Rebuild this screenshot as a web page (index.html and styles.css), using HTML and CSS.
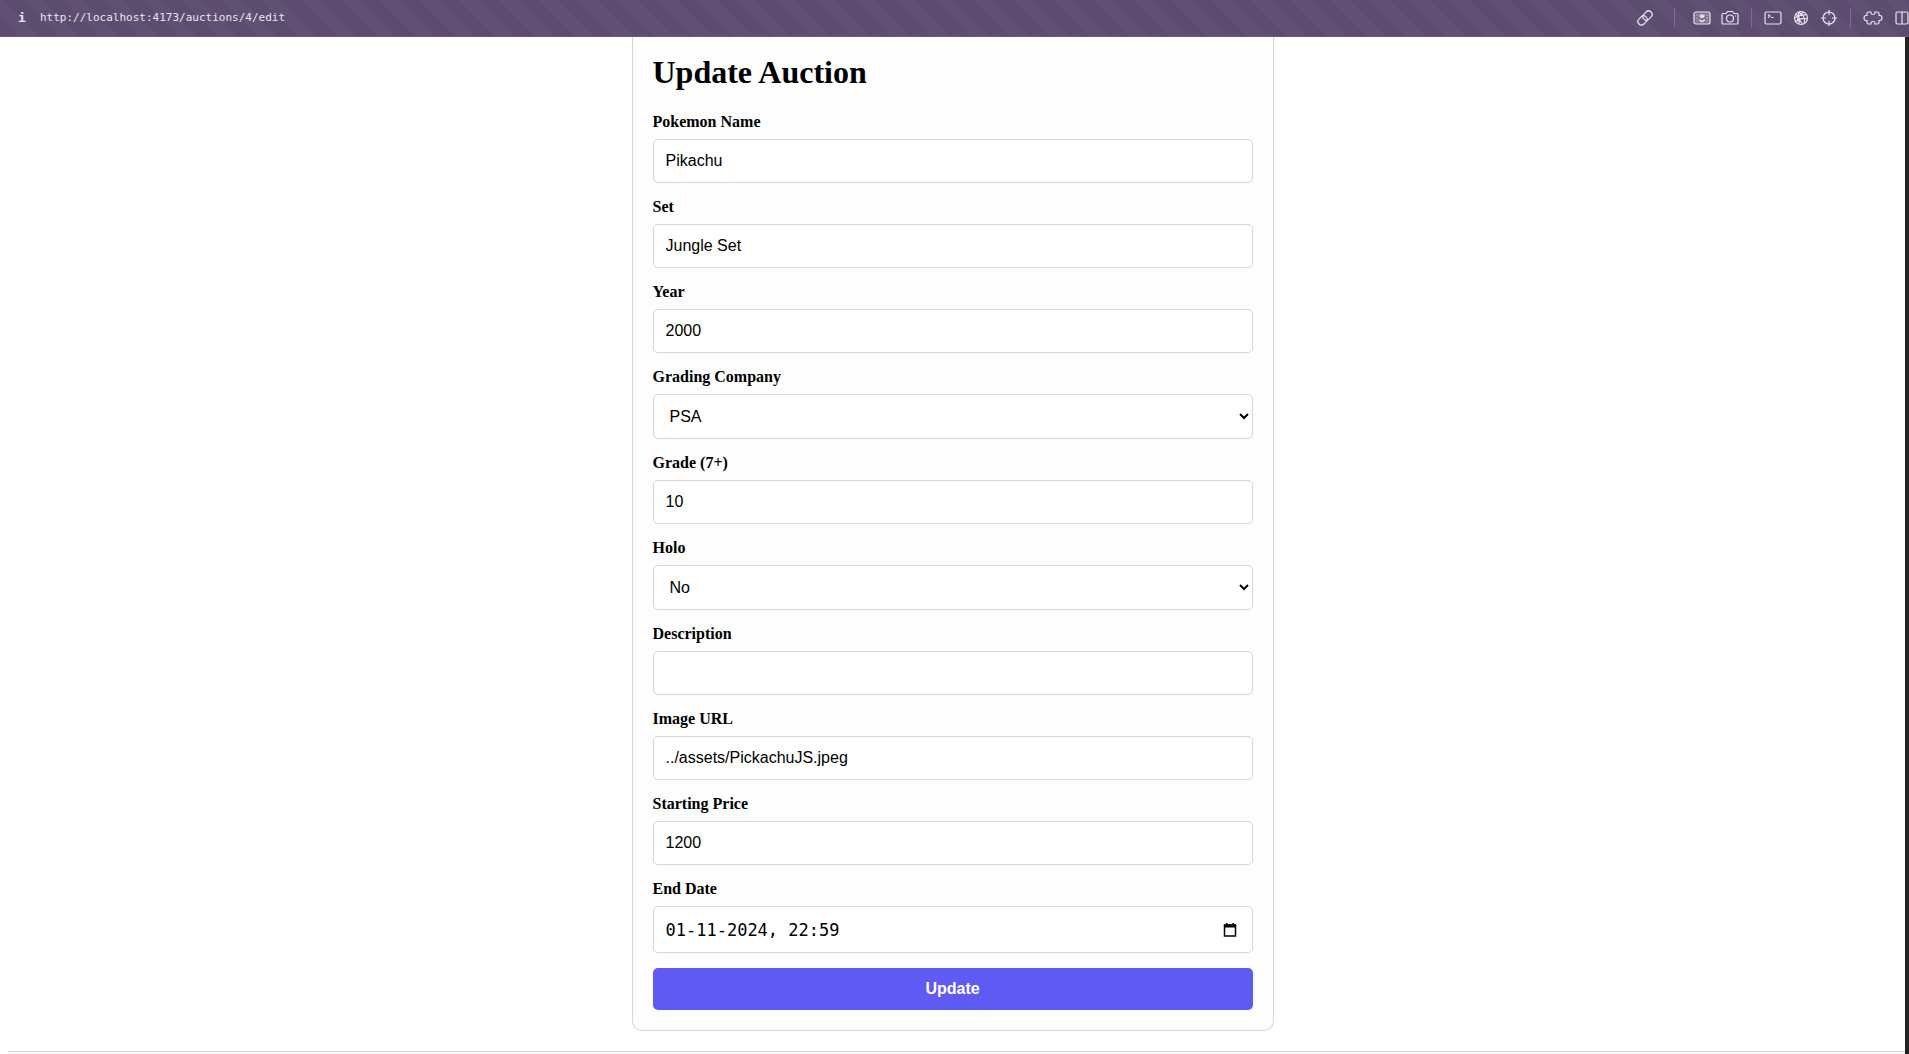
FILE: index.html
```html
<!DOCTYPE html>
<html lang="en">
<head>
<meta charset="utf-8">
<title>Update Auction</title>
<link rel="stylesheet" href="styles.css">
</head>
<body>
<header class="toolbar">
  <button class="tool info" type="button" aria-label="Page info">i</button>
  <a class="address" href="http://localhost:4173/auctions/4/edit">http://localhost:4173/auctions/4/edit</a>
  <div class="tools">
    <button class="tool" type="button" aria-label="Copy link">
      <svg width="18" height="18" viewBox="0 0 18 18"><g transform="rotate(-45 9 9)"><rect x="0.500" y="5.500" width="10" height="7" rx="3.500"/><rect x="7.500" y="5.500" width="10" height="7" rx="3.500"/></g></svg>
    </button>
    <span class="divider divider-wide"></span>
    <button class="tool" type="button" aria-label="Picture">
      <svg width="18" height="18" viewBox="0 0 18 18"><rect x="1" y="3" width="16" height="12" rx="2" fill="#fff" fill-opacity=".2"/><path d="M3.500 6h1M3.500 9h1M3.500 12h1M13.500 6h1M13.500 9h1M13.500 12h1"/><path d="M9 9C6.500 8.500 6.500 7 6.800 5.500L8 6.500L9 5L10 6.500L11.200 5.500C11.500 7 11.500 8.500 9 9ZM6 10.500Q8 10.500 9 12.500Q10 10.500 12 10.500Q11.500 13 9 13Q6.500 13 6 10.500Z" fill="#e9e5ee" stroke-width=".5"/></svg>
    </button>
    <button class="tool" type="button" aria-label="Screenshot">
      <svg width="18" height="18" viewBox="0 0 18 18"><path d="M2 4.500H5L6.500 2.500H11.500L13 4.500H16Q17 4.500 17 5.500V14Q17 15 16 15H2Q1 15 1 14V5.500Q1 4.500 2 4.500Z"/><circle cx="9" cy="9.500" r="3.500"/><path d="M14 7h1"/></svg>
    </button>
    <span class="divider"></span>
    <button class="tool" type="button" aria-label="Console">
      <svg width="18" height="18" viewBox="0 0 18 18"><rect x="1" y="3" width="16" height="12" rx="1.500"/><path d="M4 5.500L6 7L4 8.500M7 8.500h2.500"/></svg>
    </button>
    <button class="tool" type="button" aria-label="Network">
      <svg width="18" height="18" viewBox="0 0 18 18"><circle cx="9" cy="9" r="6.500"/><path d="M7 3Q5 9 10.500 15M7 3Q13 6 12.500 14M2.500 9Q8 5 14.500 6M3.500 12.500Q9 8 15.500 10M4 5Q8 8 7 15M11.500 3Q6 7 4.500 13.500"/></svg>
    </button>
    <button class="tool" type="button" aria-label="Inspect">
      <svg width="18" height="18" viewBox="0 0 18 18"><circle cx="9" cy="9" r="6"/><path d="M9 1V6M9 12V17M1 9H6M12 9H17"/></svg>
    </button>
    <span class="divider"></span>
    <button class="tool wide" type="button" aria-label="Extensions">
      <svg width="20" height="18" viewBox="0 0 20 18"><path d="M5.500 3H8V4Q8 5.500 10 5.500Q12 5.500 12 4V3H14.500Q16 3 16 4.500V6.500H17.500Q19 7 19 9Q19 11 17.500 11.500H16V13.500Q16 15 14.500 15H12V14Q12 12.500 10 12.500Q8 12.500 8 14V15H5.500Q4 15 4 13.500V11.500H2.500Q1 11 1 9Q1 7 2.500 6.500H4V4.500Q4 3 5.500 3Z"/></svg>
    </button>
    <button class="tool narrow" type="button" aria-label="Split view">
      <svg width="14" height="18" viewBox="0 0 14 18"><rect x="1" y="3" width="12" height="12" rx="1.500"/><path d="M7 3V15"/></svg>
    </button>
  </div>
</header>
<main class="page">
  <form class="card">
    <h1>Update Auction</h1>
    <label for="name">Pokemon Name</label>
    <input class="field" id="name" type="text" value="Pikachu">
    <label for="set">Set</label>
    <input class="field" id="set" type="text" value="Jungle Set">
    <label for="year">Year</label>
    <input class="field" id="year" type="text" inputmode="numeric" value="2000">
    <label for="company">Grading Company</label>
    <select class="field" id="company"><option>PSA</option></select>
    <label for="grade">Grade (7+)</label>
    <input class="field" id="grade" type="text" inputmode="numeric" value="10">
    <label for="holo">Holo</label>
    <select class="field" id="holo"><option>No</option><option>Yes</option></select>
    <label for="description">Description</label>
    <input class="field" id="description" type="text">
    <label for="image">Image URL</label>
    <input class="field" id="image" type="text" value="../assets/PickachuJS.jpeg">
    <label for="price">Starting Price</label>
    <input class="field" id="price" type="text" inputmode="numeric" value="1200">
    <label for="end">End Date</label>
    <div class="field date">
      <input id="end" type="text" value="01-11-2024, 22:59">
      <button class="picker" type="button" aria-label="Choose date">
        <svg width="14" height="16" viewBox="0 0 14 16"><path d="M1.500 3H12.500V14H1.500Z" fill="none" stroke="#000" stroke-width="1.500"/><path d="M1 2.500H13V5.500H1ZM3 1H4.500V3H3ZM9.500 1H11V3H9.500Z"/></svg>
      </button>
    </div>
    <button class="submit" type="submit">Update</button>
  </form>
  <footer class="footer"></footer>
</main>
</body>
</html>
```
FILE: styles.css
```css
* {
  box-sizing: border-box;
}

body {
  margin: 0;
  min-height: 100vh;
  display: flex;
  flex-direction: column;
  background: #fff;
  color: #000;
  font: 16px/18px "Liberation Serif", "Times New Roman", serif;
}

button {
  cursor: pointer;
}

/* Browser tool strip */
.toolbar {
  display: flex;
  align-items: center;
  height: 37px;
  flex: none;
  padding-left: 12px;
  overflow: hidden;
  border-bottom: 1px solid #6a5a82;
  background: repeating-linear-gradient(45deg, #5c4d70 0 14px, #605074 14px 28px);
  color: #e9e5ee;
  font: 11px/16px "DejaVu Sans Mono", monospace;
}

.tool {
  display: flex;
  align-items: center;
  justify-content: center;
  width: 18px;
  height: 18px;
  flex: none;
  padding: 0;
  border: 0;
  background: none;
  color: inherit;
}

.tool svg {
  fill: none;
  stroke: #e9e5ee;
  stroke-width: 1.2;
}

.wide {
  width: 20px;
}

.narrow {
  width: 14px;
  margin-left: 2px;
}

.info {
  width: 20px;
  font: bold 13px/16px "DejaVu Sans Mono", monospace;
}

.address {
  margin-left: 8px;
  color: inherit;
  text-decoration: none;
}

.tools {
  display: flex;
  align-items: center;
  gap: 10px;
  margin-left: auto;
}

.divider {
  width: 1px;
  height: 20px;
  margin: 0 2px;
  background: #7d6f91;
}

.divider-wide {
  margin: 0 8px 0 10px;
}

/* Page */
.page {
  flex: 1;
  display: flex;
  flex-direction: column;
  border-right: 4px solid #222;
}

.card {
  display: flex;
  flex-direction: column;
  width: 100%;
  max-width: 642px;
  margin: 0 auto 20px;
  padding: 17px 20px 20px;
  border: 1px solid #d5d5d5;
  border-top: 0;
  border-radius: 0 0 10px 10px;
  background: #fdfdfd;
}

h1 {
  margin: 0 0 22px;
  font-size: 32px;
  line-height: 37px;
}

label {
  margin-bottom: 8px;
  font-weight: bold;
}

.field {
  width: 100%;
  height: 44px;
  margin: 0 0 15px;
  padding: 12px;
  border: 1px solid #d5d5d5;
  border-radius: 5px;
  background: #fff;
  color: #000;
  font: 16px/18px "Liberation Sans", Arial, sans-serif;
}

select.field {
  height: 45px;
  padding: 10px 0 10px 12px;
}

.date {
  display: flex;
  align-items: center;
  height: 47px;
  padding: 0 15px 0 12px;
}

.date input {
  flex: 1;
  min-width: 0;
  padding: 0;
  border: 0;
  background: none;
  font: 17px/20px "DejaVu Sans Mono", monospace;
}

.picker {
  display: flex;
  padding: 0;
  border: 0;
  background: none;
}

.submit {
  padding: 12px;
  border: 0;
  border-radius: 5px;
  background: #5f5af3;
  color: #fff;
  font: bold 16px/18px "Liberation Sans", Arial, sans-serif;
}

.footer {
  flex: 1;
  margin-left: 8px;
  border-top: 1px solid #d5d5d5;
  background: #f8f8f8;
}
```
